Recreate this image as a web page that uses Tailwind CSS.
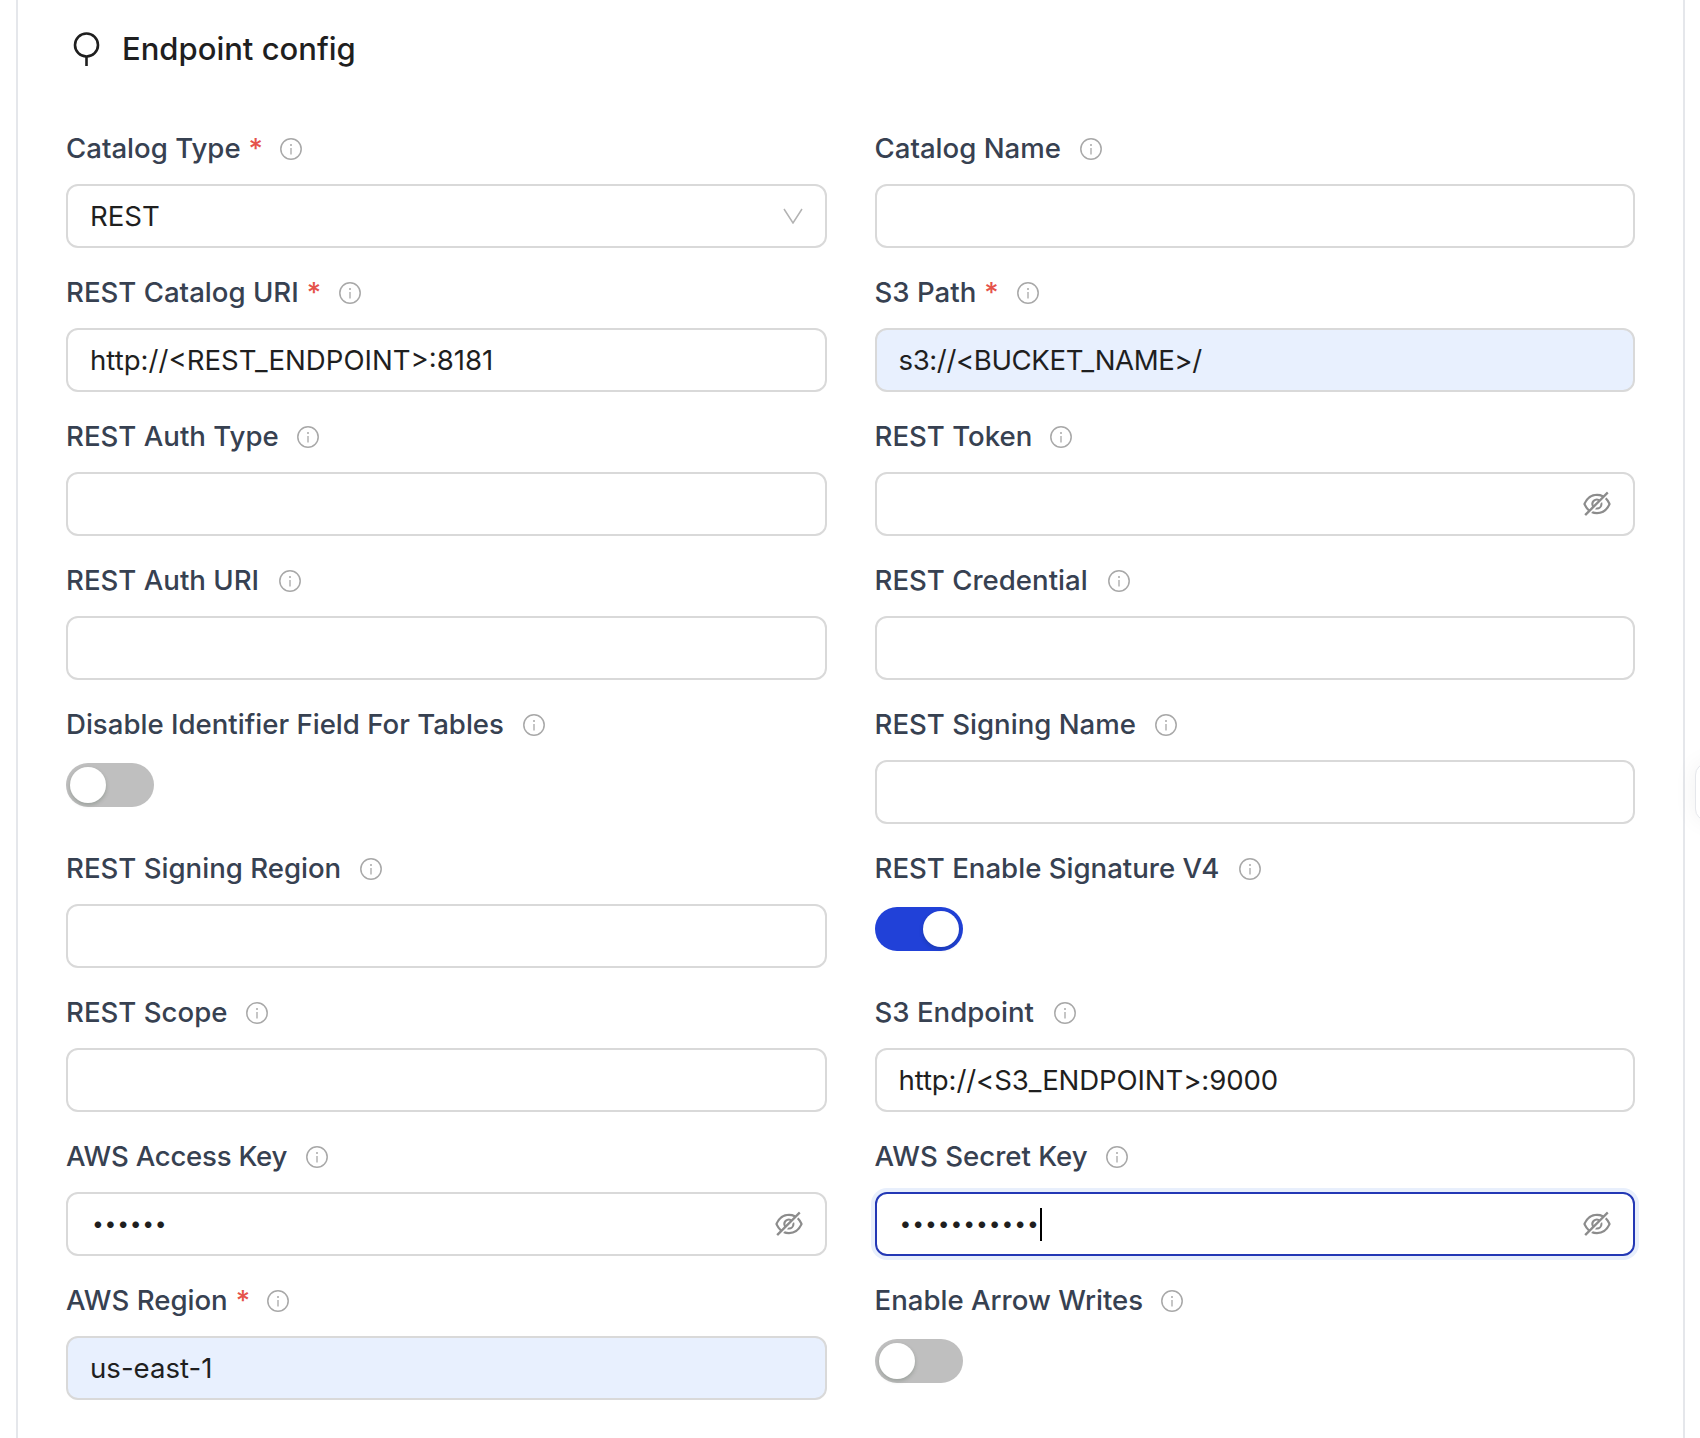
<!DOCTYPE html>
<html lang="en">
<head>
  <meta charset="UTF-8" />
  <title>Endpoint config</title>
  <script src="https://cdn.jsdelivr.net/npm/@tailwindcss/browser@4"></script>
</head>
<body class="bg-white font-['Inter',sans-serif] overflow-hidden">
  <svg class="hidden">
    <symbol id="info" viewBox="0 0 22 22">
      <circle cx="11" cy="11" r="10.2" fill="none" stroke="currentColor" stroke-width="1.5" />
      <circle cx="11" cy="7" r="1" fill="currentColor" />
      <path d="M11 10v6.5" fill="none" stroke="currentColor" stroke-width="1.3" />
    </symbol>
    <symbol id="eye" viewBox="64 64 896 896">
      <path d="M942.2 486.2Q889.47 375.11 816.7 305l-50.88 50.88C807.31 395.53 843.45 447.4 874.7 512 791.5 684.2 673.4 766 512 766q-72.67 0-133.87-22.38L323 798.75Q408 838 512 838q288.3 0 430.2-300.3a60.29 60.29 0 000-51.5zm-63.57-320.64L836 122.88a8 8 0 00-11.32 0L715.31 232.2Q624.86 186 512 186q-288.3 0-430.2 300.3a60.3 60.3 0 000 51.5q56.69 119.4 136.5 191.41L112.48 835a8 8 0 000 11.31L155.17 889a8 8 0 0011.31 0l712.15-712.12a8 8 0 000-11.32zM149.3 512C232.6 339.8 350.7 258 512 258c54.54 0 104.13 9.36 149.12 28.39l-70.3 70.3a176 176 0 00-238.13 238.13l-83.42 83.42C223.1 637.49 183.3 582.28 149.3 512zm246.7 0a112.11 112.11 0 01146.2-106.69L401.31 546.2A112 112 0 01396 512z" fill="currentColor" />
      <path d="M508 624c-3.46 0-6.87-.16-10.25-.47l-52.82 52.82a176.09 176.09 0 00227.42-227.42l-52.82 52.82c.31 3.38.47 6.79.47 10.25a111.94 111.94 0 01-112 112z" fill="currentColor" />
    </symbol>
  </svg>

  <!-- side tab peeking in from the right edge -->
  <div class="absolute top-[763px] left-[1695px] w-10 h-[58px] rounded-l-xl border border-gray-200 bg-white shadow-[0_0_24px_rgba(0,0,0,0.06)]"></div>

  <main class="mx-[16px] w-[1669px] h-[1438px] border-x-2 border-[#e5e7eb] pl-[48px] pr-[48px] pt-[28px]">
    <h2 class="flex items-center h-[42px] text-[31px] font-medium text-[#1f1f1f]">
      <svg class="w-[28px] h-[36px] ml-[7px] mr-[21px] text-[#1f1f1f]" viewBox="0 0 28 36" fill="none" stroke="currentColor" stroke-width="2.6">
        <circle cx="13.5" cy="14" r="11.5" />
        <path d="M13.5 25.5V35" />
      </svg>
      Endpoint config
    </h2>

    <form class="grid grid-cols-2 gap-x-[48px] auto-rows-[144px] mt-[58px]">
      <div>
        <label class="flex items-center h-[41px] mb-[15px] text-[27.6px] font-medium text-[#374151]">Catalog Type<span class="text-[#e5534b] ml-[8px]">*</span><svg class="w-[22px] h-[22px] ml-[17px] text-[#a8a8a8]"><use href="#info" /></svg></label>
        <div class="flex items-center justify-between h-[64px] pt-[1px] pl-[22px] pr-[22px] border-2 border-[#d9d9d9] rounded-[12px] text-[27.6px] text-[#1f1f1f]">
          REST
          <svg class="w-[20px] h-[16px] mb-[2px] text-[#b3b3b3]" viewBox="0 0 20 16" fill="none" stroke="currentColor" stroke-width="1.5"><path d="M1 1l9 14 9-14" /></svg>
        </div>
      </div>
      <div>
        <label class="flex items-center h-[41px] mb-[15px] text-[27.6px] font-medium text-[#374151]">Catalog Name<svg class="w-[22px] h-[22px] ml-[19px] text-[#a8a8a8]"><use href="#info" /></svg></label>
        <input class="block w-full h-[64px] pl-[22px] pr-[22px] border-2 border-[#d9d9d9] rounded-[12px] text-[27.6px] text-[#1f1f1f]" />
      </div>

      <div>
        <label class="flex items-center h-[41px] mb-[15px] text-[27.6px] font-medium text-[#374151]">REST Catalog URI<span class="text-[#e5534b] ml-[8px]">*</span><svg class="w-[22px] h-[22px] ml-[18px] text-[#a8a8a8]"><use href="#info" /></svg></label>
        <input value="http://&lt;REST_ENDPOINT&gt;:8181" class="block w-full h-[64px] pl-[22px] pr-[22px] border-2 border-[#d9d9d9] rounded-[12px] text-[27.6px] text-[#1f1f1f]" />
      </div>
      <div>
        <label class="flex items-center h-[41px] mb-[15px] text-[27.6px] font-medium text-[#374151]">S3 Path<span class="text-[#e5534b] ml-[8px]">*</span><svg class="w-[22px] h-[22px] ml-[18px] text-[#a8a8a8]"><use href="#info" /></svg></label>
        <input value="s3://&lt;BUCKET_NAME&gt;/" class="block w-full h-[64px] pl-[22px] pr-[22px] border-2 border-[#d9d9d9] bg-[#e8f0fe] rounded-[12px] text-[27.6px] tracking-[-0.4px] text-[#1f1f1f]" />
      </div>

      <div>
        <label class="flex items-center h-[41px] mb-[15px] text-[27.6px] font-medium text-[#374151]">REST Auth Type<svg class="w-[22px] h-[22px] ml-[18px] text-[#a8a8a8]"><use href="#info" /></svg></label>
        <input class="block w-full h-[64px] pl-[22px] pr-[22px] border-2 border-[#d9d9d9] rounded-[12px] text-[27.6px] text-[#1f1f1f]" />
      </div>
      <div>
        <label class="flex items-center h-[41px] mb-[15px] text-[27.6px] font-medium text-[#374151]">REST Token<svg class="w-[22px] h-[22px] ml-[18px] text-[#a8a8a8]"><use href="#info" /></svg></label>
        <div class="flex items-center justify-end h-[64px] pr-[22px] border-2 border-[#d9d9d9] rounded-[12px]">
          <svg class="w-[28px] h-[28px] text-[#8c8c8c]"><use href="#eye" /></svg>
        </div>
      </div>

      <div>
        <label class="flex items-center h-[41px] mb-[15px] text-[27.6px] font-medium text-[#374151]">REST Auth URI<svg class="w-[22px] h-[22px] ml-[20px] text-[#a8a8a8]"><use href="#info" /></svg></label>
        <input class="block w-full h-[64px] pl-[22px] pr-[22px] border-2 border-[#d9d9d9] rounded-[12px] text-[27.6px] text-[#1f1f1f]" />
      </div>
      <div>
        <label class="flex items-center h-[41px] mb-[15px] text-[27.6px] font-medium text-[#374151]">REST Credential<svg class="w-[22px] h-[22px] ml-[20px] text-[#a8a8a8]"><use href="#info" /></svg></label>
        <input class="block w-full h-[64px] pl-[22px] pr-[22px] border-2 border-[#d9d9d9] rounded-[12px] text-[27.6px] text-[#1f1f1f]" />
      </div>

      <div>
        <label class="flex items-center h-[41px] mb-[15px] text-[27.6px] font-medium text-[#374151]">Disable Identifier Field For Tables<svg class="w-[22px] h-[22px] ml-[19px] text-[#a8a8a8]"><use href="#info" /></svg></label>
        <div class="flex items-center w-[88px] h-[44px] mt-[18px] px-[4px] rounded-full bg-[#bfbfbf]">
          <span class="w-[36px] h-[36px] rounded-full bg-white shadow-[0_2px_4px_rgba(0,35,11,0.2)]"></span>
        </div>
      </div>
      <div>
        <label class="flex items-center h-[41px] mb-[15px] text-[27.6px] font-medium text-[#374151]">REST Signing Name<svg class="w-[22px] h-[22px] ml-[19px] text-[#a8a8a8]"><use href="#info" /></svg></label>
        <input class="block w-full h-[64px] pl-[22px] pr-[22px] border-2 border-[#d9d9d9] rounded-[12px] text-[27.6px] text-[#1f1f1f]" />
      </div>

      <div>
        <label class="flex items-center h-[41px] mb-[15px] text-[27.6px] font-medium text-[#374151]">REST Signing Region<svg class="w-[22px] h-[22px] ml-[19px] text-[#a8a8a8]"><use href="#info" /></svg></label>
        <input class="block w-full h-[64px] pl-[22px] pr-[22px] border-2 border-[#d9d9d9] rounded-[12px] text-[27.6px] text-[#1f1f1f]" />
      </div>
      <div>
        <label class="flex items-center h-[41px] mb-[15px] text-[27.6px] font-medium text-[#374151]">REST Enable Signature V4<svg class="w-[22px] h-[22px] ml-[20px] text-[#a8a8a8]"><use href="#info" /></svg></label>
        <div class="flex items-center justify-end w-[88px] h-[44px] mt-[18px] px-[4px] rounded-full bg-[#2141d8]">
          <span class="w-[36px] h-[36px] rounded-full bg-white shadow-[0_2px_4px_rgba(0,35,11,0.2)]"></span>
        </div>
      </div>

      <div>
        <label class="flex items-center h-[41px] mb-[15px] text-[27.6px] font-medium text-[#374151]">REST Scope<svg class="w-[22px] h-[22px] ml-[19px] text-[#a8a8a8]"><use href="#info" /></svg></label>
        <input class="block w-full h-[64px] pl-[22px] pr-[22px] border-2 border-[#d9d9d9] rounded-[12px] text-[27.6px] text-[#1f1f1f]" />
      </div>
      <div>
        <label class="flex items-center h-[41px] mb-[15px] text-[27.6px] font-medium text-[#374151]">S3 Endpoint<svg class="w-[22px] h-[22px] ml-[20px] text-[#a8a8a8]"><use href="#info" /></svg></label>
        <input value="http://&lt;S3_ENDPOINT&gt;:9000" class="block w-full h-[64px] pl-[22px] pr-[22px] border-2 border-[#d9d9d9] rounded-[12px] text-[27.6px] tracking-[-0.12px] text-[#1f1f1f]" />
      </div>

      <div>
        <label class="flex items-center h-[41px] mb-[15px] text-[27.6px] tracking-[-0.25px] font-medium text-[#374151]">AWS Access Key<svg class="w-[22px] h-[22px] ml-[19px] text-[#a8a8a8]"><use href="#info" /></svg></label>
        <div class="flex items-center justify-between h-[64px] pl-[24px] pr-[22px] border-2 border-[#d9d9d9] rounded-[12px]">
          <span class="text-[21px] tracking-[0.75px] text-[#1f1f1f]">••••••</span>
          <svg class="w-[28px] h-[28px] text-[#8c8c8c]"><use href="#eye" /></svg>
        </div>
      </div>
      <div>
        <label class="flex items-center h-[41px] mb-[15px] text-[27.6px] font-medium text-[#374151]">AWS Secret Key<svg class="w-[22px] h-[22px] ml-[18px] text-[#a8a8a8]"><use href="#info" /></svg></label>
        <div class="flex items-center justify-between h-[64px] pl-[23px] pr-[22px] border-2 border-[#2338b5] rounded-[12px] shadow-[0_0_0_4px_#e8effc]">
          <span class="flex items-center text-[21px] tracking-[0.95px] text-[#1f1f1f]">•••••••••••<span class="w-[2px] h-[33px] bg-black"></span></span>
          <svg class="w-[28px] h-[28px] text-[#8c8c8c]"><use href="#eye" /></svg>
        </div>
      </div>

      <div>
        <label class="flex items-center h-[41px] mb-[15px] text-[27.6px] font-medium text-[#374151]">AWS Region<span class="text-[#e5534b] ml-[8px]">*</span><svg class="w-[22px] h-[22px] ml-[17px] text-[#a8a8a8]"><use href="#info" /></svg></label>
        <input value="us-east-1" class="block w-full h-[64px] pl-[22px] pr-[22px] border-2 border-[#d9d9d9] bg-[#e8f0fe] rounded-[12px] text-[27.6px] text-[#1f1f1f]" />
      </div>
      <div>
        <label class="flex items-center h-[41px] mb-[15px] text-[27.6px] font-medium text-[#374151]">Enable Arrow Writes<svg class="w-[22px] h-[22px] ml-[18px] text-[#a8a8a8]"><use href="#info" /></svg></label>
        <div class="flex items-center w-[88px] h-[44px] mt-[18px] px-[4px] rounded-full bg-[#bfbfbf]">
          <span class="w-[36px] h-[36px] rounded-full bg-white shadow-[0_2px_4px_rgba(0,35,11,0.2)]"></span>
        </div>
      </div>
    </form>
  </main>
</body>
</html>
